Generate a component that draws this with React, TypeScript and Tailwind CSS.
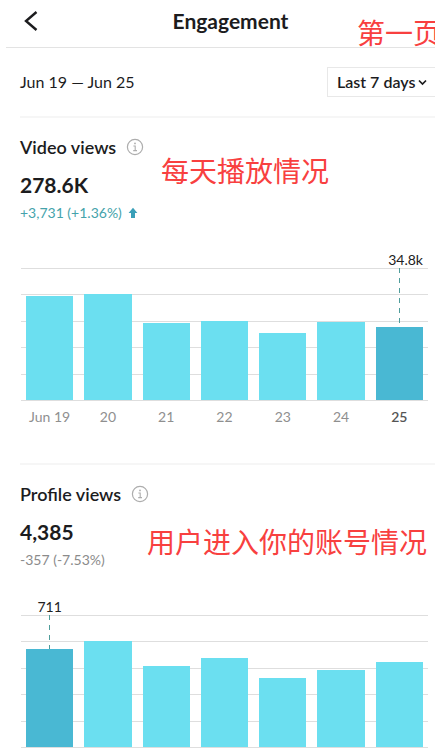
import clsx from "clsx";

type Day = { label: string; height: number };

type SectionProps = {
  title: string;
  total: string;
  change: string;
  up?: boolean;
  note: string;
  noteClass: string;
  days: Day[];
  active: number;
  activeValue: string;
  showLabels?: boolean;
};

const videoDays: Day[] = [
  { label: "Jun 19", height: 104 },
  { label: "20", height: 106 },
  { label: "21", height: 77 },
  { label: "22", height: 79 },
  { label: "23", height: 67 },
  { label: "24", height: 78 },
  { label: "25", height: 73 },
];

const profileDays: Day[] = [
  { label: "Jun 19", height: 98 },
  { label: "20", height: 106 },
  { label: "21", height: 81 },
  { label: "22", height: 89 },
  { label: "23", height: 69 },
  { label: "24", height: 77 },
  { label: "25", height: 85 },
];

const noteStyle =
  "absolute whitespace-nowrap font-['Noto_Sans_CJK_SC',sans-serif] text-[28px] leading-8 text-[#f8403f]";

const InfoIcon = () => (
  <svg width="18" height="18" viewBox="0 0 18 18" fill="none" stroke="#adadad">
    <circle cx="9" cy="9" r="7.6" strokeWidth="1.2" />
    <path d="M7.4 8h1.8v4.4M7.2 12.6h3.8" strokeWidth="1.1" />
    <circle cx="9" cy="5.4" r="0.9" fill="#adadad" stroke="none" />
  </svg>
);

const Chart = ({
  days,
  active,
  activeValue,
}: Pick<SectionProps, "days" | "active" | "activeValue">) => (
  <div className="grid h-[133px]">
    <div className="col-start-1 row-start-1 flex flex-col justify-between">
      {[0, 1, 2, 3, 4, 5].map((line) => (
        <div key={line} className="h-px bg-[#dedede]" />
      ))}
    </div>
    <div className="col-start-1 row-start-1 flex gap-[11px] px-[5px] pb-px">
      {days.map((day, i) => (
        <div key={day.label} className="relative flex flex-1 flex-col justify-end">
          {i === active && (
            <>
              <span
                className={clsx(
                  "absolute bottom-full text-sm leading-4 text-[#222]",
                  i === days.length - 1 ? "right-0" : "inset-x-0 text-center"
                )}
              >
                {activeValue}
              </span>
              <div className="w-px flex-1 self-center bg-[repeating-linear-gradient(to_bottom,#4f9d9b_0px,#4f9d9b_5px,transparent_5px,transparent_10px)]" />
            </>
          )}
          <div
            className={i === active ? "bg-[#49b8d3]" : "bg-[#6bdff0]"}
            style={{ height: day.height }}
          />
        </div>
      ))}
    </div>
  </div>
);

const Section = (props: SectionProps) => (
  <section className="relative border-t-2 border-[#f6f6f6] pt-[17px]">
    <div className="flex items-center gap-2.5">
      <h2 className="text-lg leading-6 font-semibold">{props.title}</h2>
      <button type="button" aria-label={`About ${props.title}`}>
        <InfoIcon />
      </button>
    </div>
    <p className="mt-3 text-[21px] leading-7 font-bold">{props.total}</p>
    <p
      className={clsx(
        "mt-1 flex items-center gap-1.5 text-sm leading-5",
        props.up ? "text-[#45a3ab]" : "text-[#8b8b8b]"
      )}
    >
      {props.change}
      {props.up && (
        <svg width="10" height="12" viewBox="0 0 10 12" fill="#3a9fb8">
          <path d="M5 0.8 9.4 6H7v5H3V6H.6z" />
        </svg>
      )}
    </p>
    <p className={clsx(noteStyle, props.noteClass)}>{props.note}</p>
    <div className="mt-[45px] mr-[7px] ml-px">
      <Chart {...props} />
      {props.showLabels && (
        <div className="mt-1.5 mb-9 flex gap-[11px] px-[5px]">
          {props.days.map((day, i) => (
            <div
              key={day.label}
              className={clsx(
                "flex-1 text-center text-sm leading-5 whitespace-nowrap",
                i === props.active ? "font-semibold text-[#555]" : "text-[#8f8f8f]"
              )}
            >
              {day.label}
            </div>
          ))}
        </div>
      )}
    </div>
  </section>
);

export default function App() {
  return (
    <div className="relative overflow-hidden bg-white font-[Lato,sans-serif] text-[#1c1c1e]">
      <header className="ml-1.5 grid h-12 grid-cols-[48px_1fr_28px] items-center border-b border-[#e3e3e3] pb-1.5">
        <button type="button" aria-label="Back" className="pl-[18px]">
          <svg width="14" height="20" viewBox="0 0 14 20" fill="none" stroke="#1c1c1e" strokeWidth="2.4">
            <path d="M12.5 1 2 10l10.5 9" />
          </svg>
        </button>
        <h1 className="text-center text-[21px] leading-7 font-bold">Engagement</h1>
      </header>
      <p className={clsx(noteStyle, "top-4 left-[357px]")}>第一页</p>

      <main className="pl-5">
        <div className="flex h-[68px] items-center justify-between">
          <p className="text-base leading-6">Jun 19 — Jun 25</p>
          <div className="relative">
            <select
              aria-label="Date range"
              className="h-[30px] w-[108px] appearance-none border border-r-0 border-[#e8e8e8] bg-white pl-[9px] text-base leading-5 font-semibold"
            >
              <option>Last 7 days</option>
              <option>Last 28 days</option>
              <option>Last 60 days</option>
            </select>
            <svg
              className="pointer-events-none absolute top-3 right-2"
              width="9"
              height="7"
              viewBox="0 0 9 7"
              fill="none"
              stroke="#1c1c1e"
              strokeWidth="1.7"
            >
              <path d="m1 1.5 3.5 3.5L8 1.5" />
            </svg>
          </div>
        </div>

        <Section
          title="Video views"
          total="278.6K"
          change="+3,731 (+1.36%)"
          up
          note="每天播放情况"
          noteClass="top-9 left-[141px]"
          days={videoDays}
          active={6}
          activeValue="34.8k"
          showLabels
        />
        <Section
          title="Profile views"
          total="4,385"
          change="-357 (-7.53%)"
          note="用户进入你的账号情况"
          noteClass="top-[60px] left-[127px]"
          days={profileDays}
          active={0}
          activeValue="711"
        />
      </main>
    </div>
  );
}
